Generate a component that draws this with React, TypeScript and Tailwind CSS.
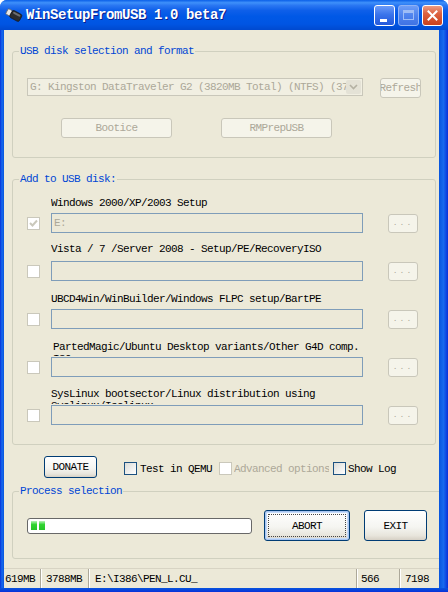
import React from "react";

type SourceRow = {
  label: string;
  value?: string;
  checked?: boolean;
  labelPad: string;
};

const sources: SourceRow[] = [
  { label: "Windows 2000/XP/2003 Setup", value: "E:", checked: true, labelPad: "pt-[4px]" },
  { label: "Vista / 7 /Server 2008 - Setup/PE/RecoveryISO", labelPad: "pt-[2px]" },
  { label: "UBCD4Win/WinBuilder/Windows FLPC setup/BartPE", labelPad: "pt-[4px]" },
  { label: "PartedMagic/Ubuntu Desktop variants/Other G4D comp. ISO", labelPad: "pt-[4px] pl-[2px]" },
  { label: "SysLinux bootsector/Linux distribution using Syslinux/Isolinux", labelPad: "pt-[3px]" },
];

const GroupBox = ({
  title,
  className,
  children,
}: {
  title: string;
  className: string;
  children: React.ReactNode;
}) => (
  <fieldset className={"ml-[8px] w-[424px] rounded-[3px] border border-[#D0D0BF] " + className}>
    <legend className="ml-[6px] px-[1px] leading-[12px] text-[#0046D5]">{title}</legend>
    {children}
  </fieldset>
);

const DisabledButton = ({ children, className }: { children?: React.ReactNode; className: string }) => (
  <div
    className={
      "flex items-center justify-center overflow-hidden whitespace-nowrap rounded-[3px] border border-[#C9C7BA] bg-[#F5F4EA] text-[#ACA899] " +
      className
    }>
    {children}
  </div>
);

const XpButton = ({
  children,
  className,
  focused,
}: {
  children: React.ReactNode;
  className: string;
  focused?: boolean;
}) => (
  <div
    className={
      "relative flex items-center justify-center rounded-[3px] border border-[#003C74] bg-[linear-gradient(180deg,#FFFFFF_0%,#F5F5F1_55%,#E8E5DC_85%,#D6D0C5_100%)] text-black " +
      (focused ? "shadow-[inset_0_0_0_1px_#A9C6F2,inset_0_0_0_2px_#C6DBF8] " : "") +
      className
    }>
    {focused && <div className="absolute inset-[3px] border border-dotted border-[#444]" />}
    {children}
  </div>
);

const CheckBox = ({ checked, enabled }: { checked?: boolean; enabled?: boolean }) => (
  <div
    className={
      "flex h-[13px] w-[13px] shrink-0 items-center justify-center border " +
      (enabled
        ? "border-[#1C5180] bg-[linear-gradient(135deg,#DCDCD7,#FFFFFF)]"
        : "border-[#CAC8BB] bg-white")
    }>
    {checked && (
      <svg width="9" height="9" viewBox="0 0 9 9">
        <path d="M1 4 L3.5 6.5 L8 1.5" fill="none" stroke="#CAC8BB" strokeWidth="2" />
      </svg>
    )}
  </div>
);

const UsbIcon = () => (
  <svg width="18" height="16" viewBox="0 0 18 16">
    <g transform="rotate(28 9 8)">
      <rect x="1" y="5" width="5" height="6" rx="1" fill="#E8E8E8" stroke="#6B6B6B" strokeWidth="0.8" />
      <rect x="5.5" y="4" width="11" height="8" rx="2" fill="#2C2C2C" stroke="#111" strokeWidth="0.6" />
      <rect x="7" y="5" width="8" height="2" rx="1" fill="#6E6E6E" />
    </g>
  </svg>
);

const TitleButtons = () => (
  <div className="flex gap-[3px]">
    <div className="relative h-[21px] w-[21px] rounded-[3px] border border-white bg-[linear-gradient(180deg,#6B9BF8_0%,#3A74EB_45%,#2459DB_100%)]">
      <div className="absolute left-[5px] top-[13px] h-[3px] w-[7px] bg-white" />
    </div>
    <div className="flex h-[21px] w-[21px] items-center justify-center rounded-[3px] border border-[#8FB2F5] bg-[linear-gradient(180deg,#6E9DF6_0%,#4E83EE_50%,#3F72E4_100%)]">
      <div className="h-[10px] w-[11px] border border-t-[3px] border-[#9DBCF6]" />
    </div>
    <div className="flex h-[21px] w-[21px] items-center justify-center rounded-[3px] border border-white bg-[linear-gradient(180deg,#EC9B83_0%,#DD6240_40%,#C9401D_100%)]">
      <svg width="11" height="11" viewBox="0 0 11 11">
        <path d="M1.5 1.5 L9.5 9.5 M9.5 1.5 L1.5 9.5" stroke="white" strokeWidth="2" strokeLinecap="square" />
      </svg>
    </div>
  </div>
);

const StatusPanel = ({ text, className }: { text: string; className: string }) => (
  <div className={"flex h-full items-center border-r border-r-[#ACA899] shadow-[1px_0_0_#FFFFFF] " + className}>
    {text}
  </div>
);

export default function App() {
  return (
    <div className="flex h-[592px] w-[448px] flex-col overflow-hidden rounded-t-[7px] bg-[#0055E5] text-[11px] leading-[12px] tracking-[-0.6px] text-black [font-family:'Liberation_Mono',monospace]">
      {/* title bar */}
      <div className="flex h-[30px] shrink-0 items-center bg-[linear-gradient(180deg,#0A5FE8_0%,#3E90FA_9%,#2A77F2_18%,#0E5FE9_35%,#0058E6_55%,#0055E3_80%,#0049CF_100%)] pl-[5px] pr-[5px]">
        <UsbIcon />
        <div className="ml-[3px] flex-1 text-[14px] font-bold tracking-[-0.4px] text-white [text-shadow:1px_1px_0_#0A1E8C]">
          WinSetupFromUSB 1.0 beta7
        </div>
        <TitleButtons />
      </div>

      <div className="flex flex-1">
        <div className="w-[4px] bg-[linear-gradient(90deg,#0831D9,#166AEE,#0855DD)]" />

        {/* client area */}
        <div className="flex w-[435px] flex-col bg-[#ECE9D8]">
          <GroupBox title="USB disk selection and format" className="mt-[15px]">
            <div className="px-[14px] pb-[19px] pt-[21px]">
              <div className="flex items-start">
                <div className="flex h-[18px] w-[336px] items-center overflow-hidden border border-[#C9C7BA] bg-[#F1EFE2] pl-[2px] pr-[1px]">
                  <div className="flex-1 overflow-hidden whitespace-nowrap text-[#ACA899]">
                    G: Kingston DataTraveler G2 (3820MB Total) (NTFS) (3781MB Free)
                  </div>
                  <div className="flex h-[14px] w-[15px] shrink-0 items-center justify-center rounded-[2px] bg-[#E4E2D6]">
                    <svg width="9" height="6" viewBox="0 0 9 6">
                      <path d="M1 1 L4.5 4.5 L8 1" fill="none" stroke="#B4B1A3" strokeWidth="1.6" />
                    </svg>
                  </div>
                </div>
                <DisabledButton className="ml-[17px] h-[20px] w-[41px]">Refresh</DisabledButton>
              </div>
              <div className="mt-[20px] flex">
                <DisabledButton className="ml-[34px] h-[20px] w-[111px]">Bootice</DisabledButton>
                <DisabledButton className="ml-[49px] h-[20px] w-[111px]">RMPrepUSB</DisabledButton>
              </div>
            </div>
          </GroupBox>

          <GroupBox title="Add to USB disk:" className="mt-[15px]">
            <div className="px-[14px] pb-[11px] pt-[8px]">
              {sources.map((row) => (
                <div key={row.label} className="h-[48px]">
                  {/* labels wrap, the second line is mostly hidden under the box */}
                  <div className={"mb-[1px] ml-[24px] h-[19px] w-[318px] overflow-hidden " + row.labelPad}>
                    {row.label}
                  </div>
                  <div className="flex h-[20px] items-center">
                    <CheckBox checked={row.checked} />
                    <div className="ml-[11px] flex h-[20px] w-[312px] items-center border border-[#7F9DB9] bg-[#ECE9D8] pl-[2px] text-[#ACA899]">
                      {row.value}
                    </div>
                    <DisabledButton className="ml-[25px] h-[19px] w-[30px] text-[8px] tracking-[2px]">
                      ...
                    </DisabledButton>
                  </div>
                </div>
              ))}
            </div>
          </GroupBox>

          {/* options row */}
          <div className="mt-[11px] flex h-[22px] items-start">
            <XpButton className="ml-[40px] h-[22px] w-[53px]">DONATE</XpButton>
            <div className="ml-[27px] flex items-center pt-[6px]">
              <CheckBox enabled />
              <span className="ml-[3px]">Test in QEMU</span>
              <div className="ml-[7px]">
                <CheckBox />
              </div>
              <span className="ml-[2px] w-[95px] overflow-hidden whitespace-nowrap text-[#ACA899]">
                Advanced options
              </span>
              <div className="ml-[4px]">
                <CheckBox enabled />
              </div>
              <span className="ml-[2px]">Show Log</span>
            </div>
          </div>

          <GroupBox title="Process selection" className="mt-[7px]">
            <div className="flex items-center px-[14px] pb-[17px] pt-[13px]">
              <div className="flex h-[16px] w-[225px] items-center gap-[2px] rounded-[3px] border border-[#686868] bg-white pl-[3px]">
                <div className="h-[9px] w-[6px] bg-[linear-gradient(180deg,#B8F2B8_0%,#2FD42F_40%,#27C427_100%)]" />
                <div className="h-[9px] w-[6px] bg-[linear-gradient(180deg,#B8F2B8_0%,#2FD42F_40%,#27C427_100%)]" />
              </div>
              <XpButton focused className="ml-[12px] h-[31px] w-[86px]">
                ABORT
              </XpButton>
              <XpButton className="ml-[14px] h-[31px] w-[63px]">EXIT</XpButton>
            </div>
          </GroupBox>

          {/* status bar */}
          <div className="mt-[9px] flex h-[20px] items-center border-t border-t-[#D8D4C4] whitespace-nowrap">
            <StatusPanel text="619MB" className="w-[37px] pl-[1px]" />
            <StatusPanel text="3788MB" className="w-[48px] pl-[5px]" />
            <StatusPanel text="E:\I386\PEN_L.CU_" className="w-[268px] pl-[6px]" />
            <StatusPanel text="566" className="w-[43px] pl-[4px]" />
            <div className="flex-1 pl-[5px]">7198</div>
          </div>
        </div>

        <div className="flex-1 bg-[linear-gradient(90deg,#0855DD,#166AEE,#0831D9)]" />
      </div>

      <div className="h-[4px] shrink-0 bg-[linear-gradient(180deg,#0855DD,#0831D9)]" />
    </div>
  );
}
